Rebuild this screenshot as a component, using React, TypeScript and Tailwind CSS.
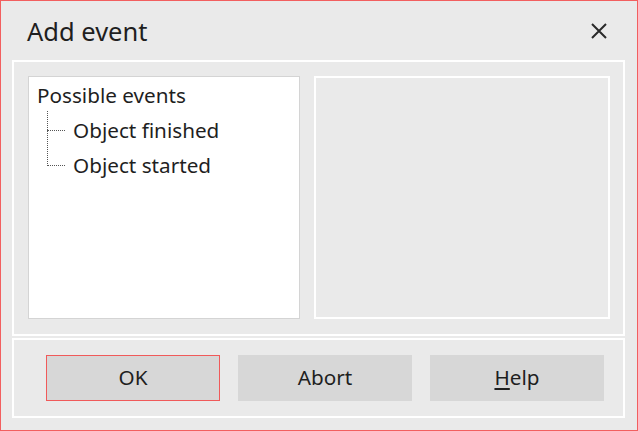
import React from 'react'

const font = { fontFamily: '"Noto Sans", "Open Sans", sans-serif' }

const TreeList: React.FC = () => {
    const children = ['Object finished', 'Object started']
    return (
        <div className="w-[272px] h-[243px] bg-white border border-[#d4d4d4] pt-px pl-2 text-[20.7px] text-[#1f1f1f]">
            <div className="h-[35px] flex items-center">Possible events</div>
            <div className="relative">
                <div className="absolute left-[10px] top-[-2px] h-[55px] border-l border-dotted border-[#555]"></div>
                {children.map((child, index) => {
                    return <div className="h-[35px] flex items-center pl-[10px]" key={index}>
                        <span className="w-[18px] border-t border-dotted border-[#555]"></span>
                        <span className="ml-[8px]">{child}</span>
                    </div>
                })}
            </div>
        </div>
    )
}

const Button: React.FC<{ label: React.ReactNode; active?: boolean }> = ({ label, active }) => {
    return (
        <div className={`w-[174px] h-[46px] flex items-center justify-center bg-[#d7d7d7] text-[20.7px] text-[#1f1f1f] border ${active ? 'border-[#f05a5a]' : 'border-[#d7d7d7]'}`}>
            {label}
        </div>
    )
}

export default function App() {
    return (
        <div className="w-[638px] h-[431px] bg-[#eaeaea] border border-[#f25f5f] flex flex-col" style={font}>
            <div className="h-[59px] flex items-center justify-between pl-[26px] pr-[30px]">
                <div className="text-[25.5px] text-[#1f1f1f] mt-[1px]">Add event</div>
                <svg width="16" height="16" viewBox="0 0 16 16" className="mt-[1px]">
                    <path d="M1 1 L15 15 M15 1 L1 15" stroke="#2a2a2a" strokeWidth="2" />
                </svg>
            </div>
            <div className="ml-[11px] w-[613px] h-[276px] border-2 border-white flex gap-[14px] pt-[14px] pl-[14px]">
                <TreeList />
                <div className="w-[296px] h-[243px] border-2 border-white"></div>
            </div>
            <div className="ml-[11px] mt-[2px] w-[613px] h-[80px] border-2 border-white flex gap-[18px] pt-[15px] pl-[32px]">
                <Button label="OK" active />
                <Button label="Abort" />
                <Button label={<span><span className="underline underline-offset-[3px]">H</span>elp</span>} />
            </div>
        </div>
    )
}
